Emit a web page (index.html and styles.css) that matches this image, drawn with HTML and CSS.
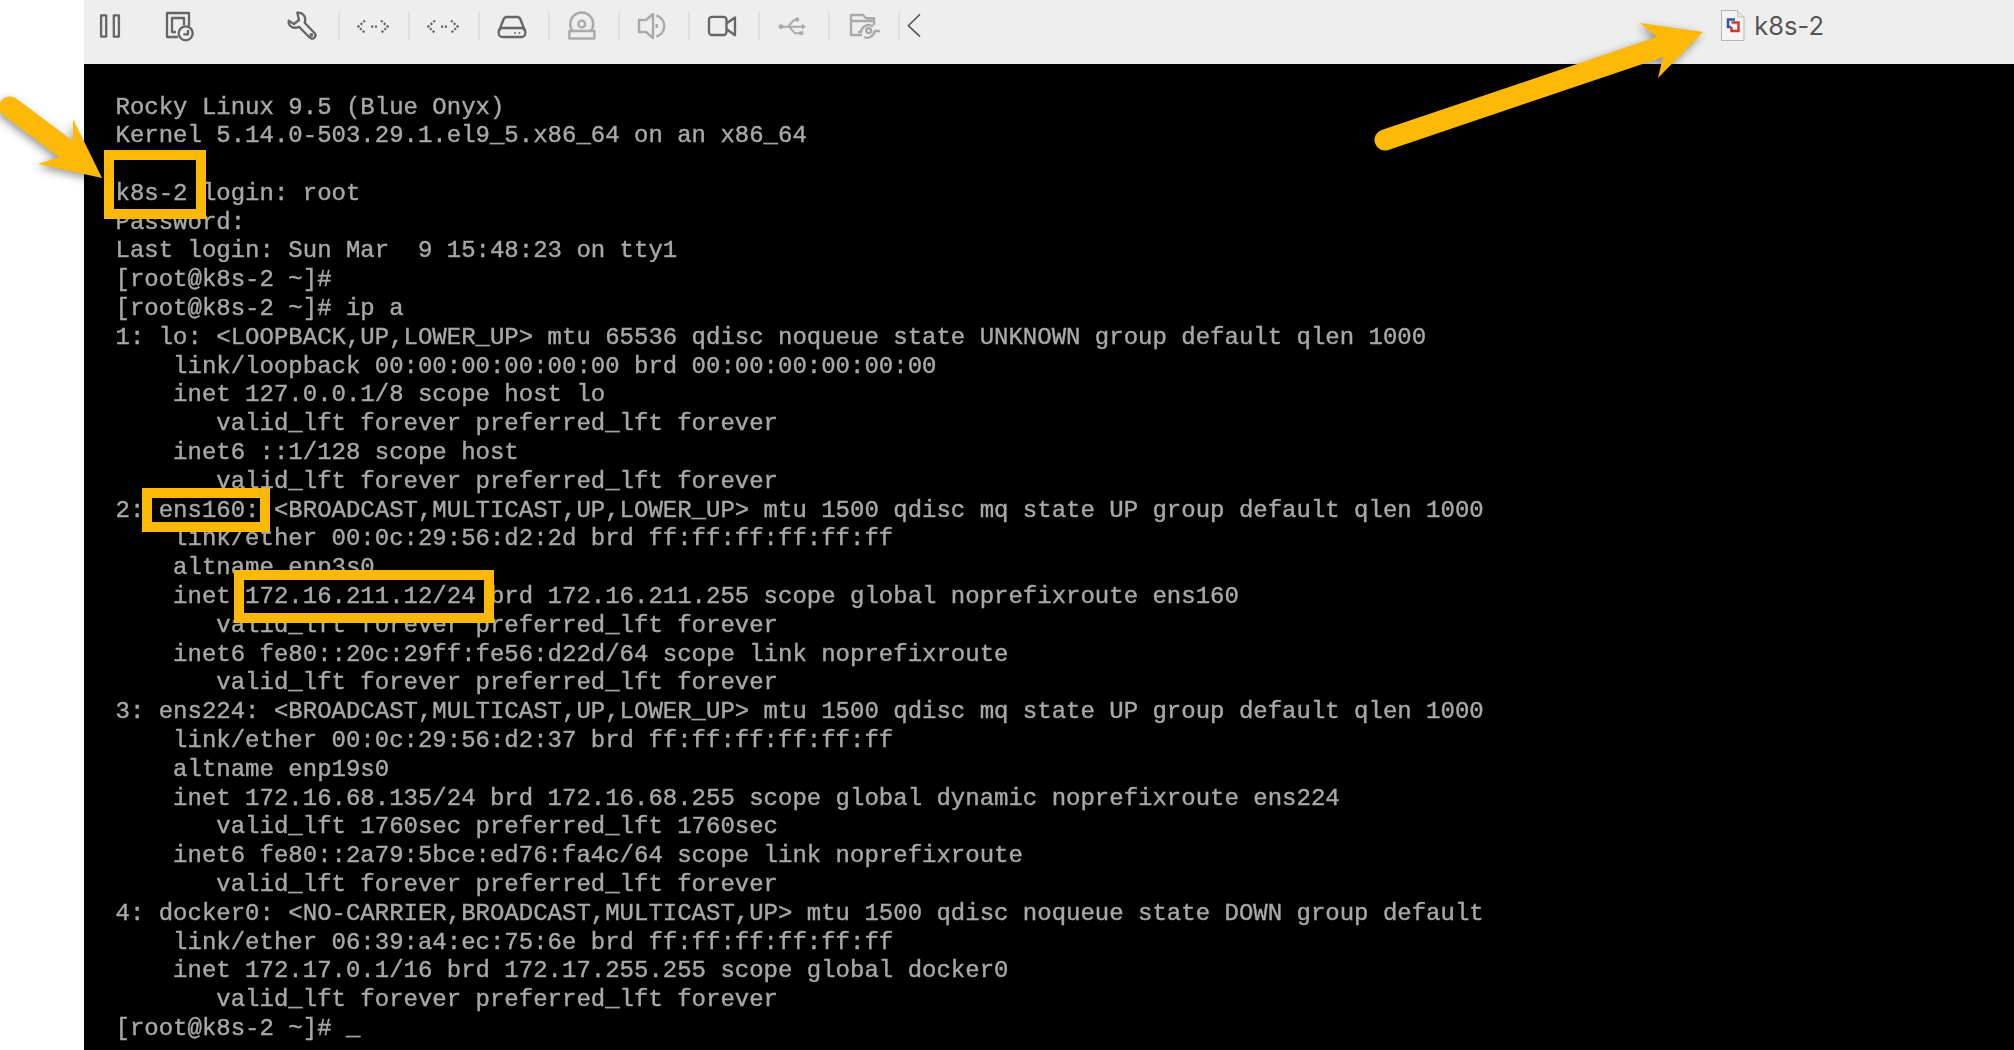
FILE: index.html
```html
<!DOCTYPE html>
<html lang="en">
<head>
<meta charset="utf-8">
<title>k8s-2</title>
<link rel="stylesheet" href="styles.css">
</head>
<body>
<div class="window">
  <header class="toolbar">
    <div class="slot slot-pause"><svg class="icon" viewBox="88 4 44 44"><rect x="101.1" y="15.4" width="5.1" height="21.2"/><rect x="113.8" y="15.4" width="5.1" height="21.2"/></svg></div>
    <div class="slot slot-clock"><svg class="icon" viewBox="159 4 44 44"><path d="M178 37H167V13H189V26M176 32H172V18H184V25"/><circle cx="185.7" cy="33.3" r="7"/><path d="M188 30V34.3H183.3"/></svg></div>
    <div class="slot sep slot-tools"><svg class="icon" viewBox="282 4 44 44"><path d="M297.3 12.7C302.3 12 306.7 16 304.7 22.7L314.7 33.3C317.3 36.7 312.7 40.7 309.3 37.3L299 26.7C294 29.3 288 26.7 288.7 20.7L294 24L299 20Z"/><circle cx="311.3" cy="35" r=".8"/></svg></div>
    <div class="slot sep"><svg class="icon" viewBox="352 4 44 44"><path class="dots" d="M365 20.5L358.3 26.7L365 33"/><path class="dots" d="M371 26.7H377"/><path class="dots" d="M381 20.5L387.7 26.7L381 33"/></svg></div>
    <div class="slot sep"><svg class="icon" viewBox="422 4 44 44"><path class="dots" d="M435 20.5L428.3 26.7L435 33"/><path class="dots" d="M441 26.7H447"/><path class="dots" d="M451 20.5L457.7 26.7L451 33"/></svg></div>
    <div class="slot sep"><svg class="icon" viewBox="492 4 44 44"><path d="M499 31L503.5 19.5Q504.5 17 507 17H517Q519.5 17 520.5 19.5L525 31"/><rect x="498.7" y="28" width="26.6" height="9" rx="3.8"/><circle class="solid" cx="515" cy="33" r=".9"/><circle class="solid" cx="519.4" cy="33" r=".9"/></svg></div>
    <div class="slot sep"><svg class="icon dim" viewBox="562 4 44 44"><circle cx="581.7" cy="24" r="11.5"/><circle cx="581.7" cy="24" r="3.4"/><rect class="cover" x="569.4" y="31" width="25" height="7.5"/></svg></div>
    <div class="slot sep"><svg class="icon dim" viewBox="632 4 44 44"><path d="M646 20H639V32H646L653 38V14Z"/><path d="M656.5 15.5A11 11 0 0 1 656.5 36.5M656.7 24V28"/></svg></div>
    <div class="slot sep"><svg class="icon" viewBox="702 4 44 44"><rect x="709" y="16.8" width="17.5" height="18.2" rx="3"/><path d="M726.7 23.3L735 17.5V35.3L726.7 29.3"/></svg></div>
    <div class="slot sep"><svg class="icon dim" viewBox="772 4 44 44"><circle class="fill" cx="781" cy="26.7" r="2.4"/><path class="thin" d="M783 26.7H804M788 26.7L794 20H797M789 26.7L795 33.3H800"/><path class="fill" d="M802 23.8L806 26.7L802 29.6Z"/><circle class="fill" cx="797" cy="19.5" r="2.2"/><rect class="fill" x="799.5" y="31.3" width="3.8" height="3.8"/></svg></div>
    <div class="slot sep"><svg class="icon dim" viewBox="842 4 44 44"><path d="M862 35H851V15H863L866 18.3H874V25M851 21H874"/><circle cx="868.7" cy="30.7" r="2.4"/><path d="M858 32H861C862 26 869 23 873 26.5M864 37C868 39 873 37 875 31H880"/></svg></div>
    <div class="slot slot-back"><svg class="icon back" viewBox="890 4 44 44"><path d="M919 14.3L907.3 25.7L919 36.7"/></svg></div>
    <div class="title">
      <svg class="doc" viewBox="1719 8 28 35">
        <path class="sheet" d="M1721.5 10.5H1737.5L1744 17V40.5H1721.5Z"/>
        <path class="fold" d="M1737.5 10.5V17H1744"/>
        <path class="blue" d="M1735 19.5H1728V27H1731"/>
        <path class="red" d="M1731.5 22.5H1738.5V31H1731.5V27"/>
      </svg>
      <span class="name">k8s-2</span>
    </div>
  </header>
  <main class="console">
<pre class="tty">Rocky Linux 9.5 (Blue Onyx)
Kernel 5.14.0-503.29.1.el9_5.x86_64 on an x86_64

k8s-2 login: root
Password:
Last login: Sun Mar  9 15:48:23 on tty1
[root@k8s-2 ~]#
[root@k8s-2 ~]# ip a
1: lo: &lt;LOOPBACK,UP,LOWER_UP&gt; mtu 65536 qdisc noqueue state UNKNOWN group default qlen 1000
    link/loopback 00:00:00:00:00:00 brd 00:00:00:00:00:00
    inet 127.0.0.1/8 scope host lo
       valid_lft forever preferred_lft forever
    inet6 ::1/128 scope host
       valid_lft forever preferred_lft forever
2: ens160: &lt;BROADCAST,MULTICAST,UP,LOWER_UP&gt; mtu 1500 qdisc mq state UP group default qlen 1000
    link/ether 00:0c:29:56:d2:2d brd ff:ff:ff:ff:ff:ff
    altname enp3s0
    inet 172.16.211.12/24 brd 172.16.211.255 scope global noprefixroute ens160
       valid_lft forever preferred_lft forever
    inet6 fe80::20c:29ff:fe56:d22d/64 scope link noprefixroute
       valid_lft forever preferred_lft forever
3: ens224: &lt;BROADCAST,MULTICAST,UP,LOWER_UP&gt; mtu 1500 qdisc mq state UP group default qlen 1000
    link/ether 00:0c:29:56:d2:37 brd ff:ff:ff:ff:ff:ff
    altname enp19s0
    inet 172.16.68.135/24 brd 172.16.68.255 scope global dynamic noprefixroute ens224
       valid_lft 1760sec preferred_lft 1760sec
    inet6 fe80::2a79:5bce:ed76:fa4c/64 scope link noprefixroute
       valid_lft forever preferred_lft forever
4: docker0: &lt;NO-CARRIER,BROADCAST,MULTICAST,UP&gt; mtu 1500 qdisc noqueue state DOWN group default
    link/ether 06:39:a4:ec:75:6e brd ff:ff:ff:ff:ff:ff
    inet 172.17.0.1/16 brd 172.17.255.255 scope global docker0
       valid_lft forever preferred_lft forever
[root@k8s-2 ~]# _</pre>
  </main>
  <div class="mark mark-host"></div>
  <div class="mark mark-iface"></div>
  <div class="mark mark-ip"></div>
  <svg class="arrows" viewBox="0 0 2014 1050">
    <g class="arrow">
      <path class="shaft" d="M10 107L66 149"/>
      <path class="head" d="M102 178L73 119L73 142L60 157L38 164Z"/>
    </g>
    <g class="arrow">
      <path class="shaft" d="M1385 140L1660 47"/>
      <path class="head" d="M1703 32L1640 23L1657 37L1663 57L1658 78Z"/>
    </g>
  </svg>
</div>
</body>
</html>
```
FILE: styles.css
```css
* { box-sizing: border-box; }
html, body { margin: 0; height: 100%; background: #fff; }
.window {
  position: relative;
  height: 1050px;
  overflow: hidden;
  padding-left: 84px;
  display: flex;
  flex-direction: column;
}
.toolbar {
  flex: 0 0 64px;
  background: #eeeeee;
  display: flex;
  align-items: flex-start;
  padding-top: 12px;
}
.slot {
  flex: 0 0 70px;
  min-width: 0;
  height: 28px;
  display: flex;
  align-items: center;
  justify-content: center;
  border-right: 2px solid transparent;
}
.sep { border-right-color: #dedede; }
.slot-pause { flex-basis: 54px; }
.slot-clock { flex-basis: 88px; }
.slot-tools { margin-left: 44px; }
.slot-back { flex-basis: 28px; }
.icon {
  flex: none;
  width: 44px;
  height: 44px;
  fill: none;
  stroke: #666;
  stroke-width: 2.3;
  stroke-linejoin: round;
  overflow: visible;
}
.icon.dim { stroke: #aaa; stroke-width: 2.4; }
.icon .solid { fill: #666; stroke: none; }
.icon .dots { stroke-width: 2.2; stroke-dasharray: 2.2 1.6; stroke-linejoin: miter; }
.icon .cover { fill: #eee; }
.icon .fill { fill: #aaa; stroke: none; }
.icon .thin { stroke-width: 2; }
.icon.back { stroke: #555; stroke-width: 1.6; }
.title {
  margin-left: auto;
  margin-top: -4px;
  padding-right: 190px;
  display: flex;
  align-items: center;
  gap: 7px;
}
.doc { width: 28px; height: 35px; flex: none; }
.sheet { fill: #f4f4f4; stroke: #b4b4b4; stroke-width: 1; }
.fold { fill: #e4e4e4; stroke: #c4c4c4; stroke-width: 1; }
.blue { fill: none; stroke: #2a5caa; stroke-width: 2.5; }
.red { fill: none; stroke: #d8352a; stroke-width: 2.5; }
.name {
  font-family: "Inter", "Liberation Sans", sans-serif;
  font-size: 25.5px;
  line-height: 34px;
  color: #555;
}
.console {
  flex: 1;
  background: #000;
  padding: 29.5px 0 0 31.5px;
  overflow: hidden;
}
.tty {
  margin: 0;
  font-family: "Liberation Mono", monospace;
  font-size: 24px;
  line-height: 28.8px;
  color: #a8a8a8;
  -webkit-text-stroke: .4px #a8a8a8;
  filter: blur(.6px);
}
.mark {
  position: absolute;
  border: 10px solid #fdb906;
}
.mark-host { left: 104px; top: 150px; width: 102px; height: 69px; }
.mark-iface { left: 142px; top: 488px; width: 128px; height: 44px; }
.mark-ip { left: 234px; top: 570px; width: 260px; height: 53px; }
.arrows {
  position: absolute;
  left: 0;
  top: 0;
  width: 2014px;
  height: 1050px;
  pointer-events: none;
}
.arrow { filter: drop-shadow(-2px 3px 4px rgba(0,0,0,.4)); }
.shaft { fill: none; stroke: #fdb906; stroke-width: 21; stroke-linecap: round; }
.head { fill: #fdb906; }
```
